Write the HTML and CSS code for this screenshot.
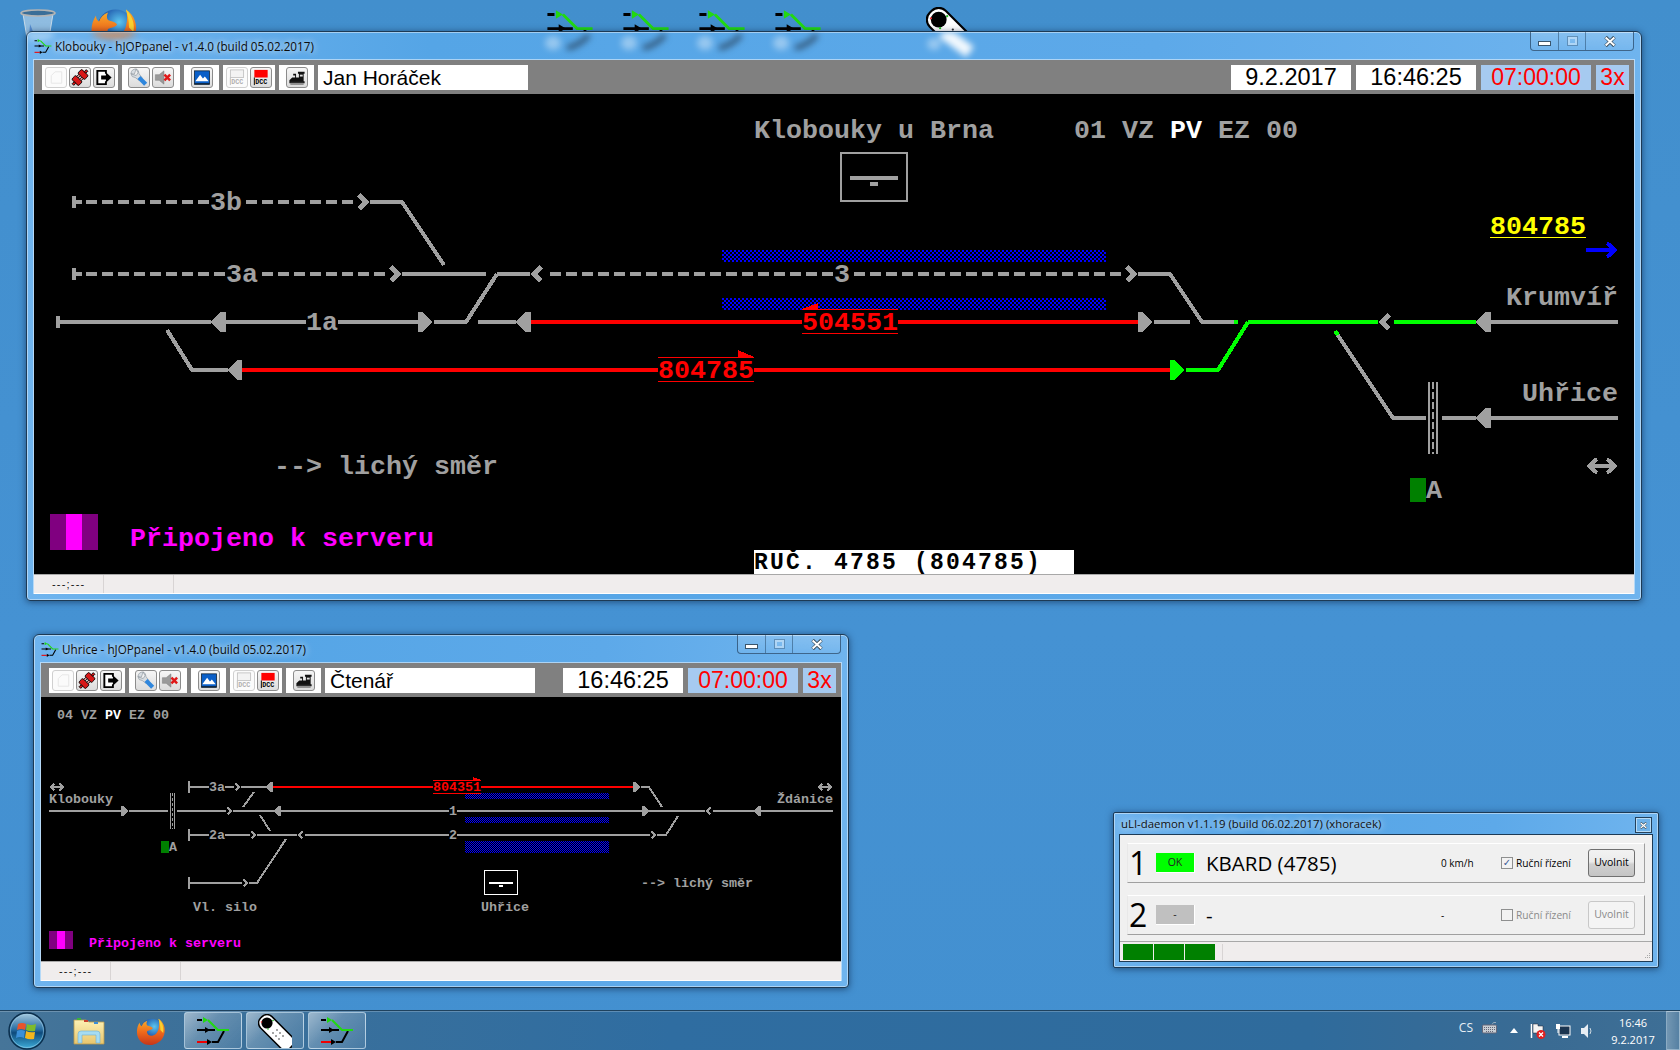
FILE: index.html
```html
<!DOCTYPE html>
<html lang="cs">
<head>
<meta charset="utf-8">
<title>hJOPpanel</title>
<link rel="stylesheet" href="styles.css">
</head>
<body>
<svg class="defs" width="0" height="0" aria-hidden="true">
  <defs>
    <pattern id="chk2" width="4" height="4" patternUnits="userSpaceOnUse"><rect width="2" height="2" fill="#00f"/><rect x="2" y="2" width="2" height="2" fill="#00f"/></pattern>
    <pattern id="chk1" width="2" height="2" patternUnits="userSpaceOnUse"><rect width="1" height="1" fill="#00f"/><rect x="1" y="1" width="1" height="1" fill="#00f"/></pattern>
    <polygon id="sr" points="0,-10 5,-10 14.5,0 5,10 0,10"/>
    <polygon id="sl" points="14.5,-10 9.5,-10 0,0 9.5,10 14.5,10"/>
    <polyline id="cr" points="5,-7 12,0 5,7"/>
    <polyline id="cl" points="11,-7 4,0 11,7"/>
    <path id="dbl" d="M4 0H28M11 -7L3 0L11 7M21 -7L29 0L21 7"/>
    <symbol id="hjop" viewBox="0 0 34 28">
      <path d="M1 3H6M1 13H19M16 25H22L28 14" fill="none" stroke="#000" stroke-width="2"/>
      <path d="M1 25H11" fill="none" stroke="#e00" stroke-width="2"/>
      <path d="M12 3L22 13H33" fill="none" stroke="#22d911" stroke-width="2"/>
      <polygon points="7,0 12,3 7,6" fill="#22d911"/>
      <polygon points="9,10 14,13 9,16" fill="#000"/>
      <polygon points="11,22 16,25 11,28" fill="#000"/>
    </symbol>
    <symbol id="remote" viewBox="0 0 34 34">
      <rect x="1" y="1" width="42" height="16" rx="7" transform="rotate(45 9 9)" fill="#fff" stroke="#000" stroke-width="1.5"/>
      <circle cx="9" cy="9" r="5.6" fill="#000"/>
      <circle cx="3.5" cy="8" r=".8" fill="#e33"/><circle cx="15" cy="6.500" r=".8" fill="#2b2"/><circle cx="10" cy="15" r=".8" fill="#2b2"/>
      <circle cx="19" cy="16" r=".8" fill="#333"/><circle cx="22" cy="19" r=".8" fill="#333"/><circle cx="25" cy="22" r=".8" fill="#333"/>
      <circle cx="15" cy="19" r=".8" fill="#333"/><circle cx="18" cy="22" r=".8" fill="#333"/><circle cx="21" cy="25" r=".8" fill="#333"/>
    </symbol>
    <radialGradient id="ffglobe" cx=".6" cy=".35" r=".7"><stop offset="0" stop-color="#5cc6f0"/><stop offset=".55" stop-color="#2a6cb8"/><stop offset="1" stop-color="#27306e"/></radialGradient>
    <linearGradient id="fffox" x1="0" y1="0" x2="0" y2="1"><stop offset="0" stop-color="#f8b52a"/><stop offset=".5" stop-color="#ef6a1c"/><stop offset="1" stop-color="#c6361a"/></linearGradient>
    <symbol id="firefox" viewBox="0 0 32 32">
      <circle cx="17" cy="15" r="12" fill="url(#ffglobe)"/>
      <path d="M24 3C30 7 32 14 30 20C28 27 21 31 15 31C7 31 1 25 1 17C1 13 2 10 4 7C4 9 4.500 10 6 11C7 8 9 6 12 5C11 7 11 9 12 10C14 11 17 11 18 13C17 15 14 15 12 16C11 18 13 21 16 21C20 21 23 18 24 14C25 10 25 6 24 3Z" fill="url(#fffox)"/>
      <path d="M24 3C28 7 30 12 29 18L26 15C26 10 25 6 24 3Z" fill="#fad02e"/>
    </symbol>
    <linearGradient id="orbg" x1="0" y1="0" x2="0" y2="1"><stop offset="0" stop-color="#a8cbe0"/><stop offset=".45" stop-color="#2a6fa4"/><stop offset=".55" stop-color="#0d4a7c"/><stop offset="1" stop-color="#3fb0dc"/></linearGradient>
    <symbol id="orb" viewBox="0 0 38 38">
      <circle cx="19" cy="19" r="18" fill="url(#orbg)" stroke="#0b2f4d" stroke-width="1.500"/>
      <circle cx="19" cy="19" r="16.500" fill="none" stroke="#9ccbe6" stroke-width=".6"/>
      <path d="M10 12Q14 10 18 12L17 18Q13 16 9 18Z" fill="#e8542c"/>
      <path d="M19 12Q23 14 28 12L27 19Q22 20 18 18Z" fill="#7fbb2a"/>
      <path d="M9 19Q13 17 17 19L16 26Q12 24 8 26Z" fill="#3a8fd8"/>
      <path d="M18 19Q22 21 27 20L26 27Q21 28 17 26Z" fill="#f2b61d"/>
    </symbol>
    <linearGradient id="fld" x1="0" y1="0" x2="0" y2="1"><stop offset="0" stop-color="#fdf1b4"/><stop offset="1" stop-color="#e8c66e"/></linearGradient>
    <symbol id="folder" viewBox="0 0 32 28">
      <path d="M1 3H13L16 5H31V27H1Z" fill="url(#fld)" stroke="#b99b4c" stroke-width=".8"/>
      <rect x="4" y="1" width="4" height="2" fill="#3cb23c"/><rect x="11" y="3" width="4" height="2" fill="#c8402f"/><rect x="21" y="5" width="4" height="2" fill="#3b8ed8"/>
      <path d="M5 26V17Q5 14 8 14H24Q27 14 27 17V26H23V18H9V26Z" fill="#a6dcf2" stroke="#6eaed0" stroke-width=".6"/>
    </symbol>
    <symbol id="bin" viewBox="0 0 36 36">
      <path d="M3 6L8 36H28L33 6Z" fill="#cfe2f0" fill-opacity=".55" stroke="#dfe8ee" stroke-width=".8"/>
      <ellipse cx="18" cy="5" rx="17" ry="3" fill="#3a6e98" stroke="#b4b4b4" stroke-width="1.600"/>
      <path d="M10 16L14 26L9 30Z" fill="#3c78c8" fill-opacity=".7"/>
    </symbol>
    <symbol id="i-blank" viewBox="0 0 20 20"><path d="M5 16V8L9 4H16V16Z" fill="none" stroke="#e6e6e6"/></symbol>
    <symbol id="i-plug" viewBox="0 0 20 20">
      <g transform="rotate(-45 10 10)" stroke="#000" stroke-width=".9">
        <rect x="2.500" y="5" width="6" height="10" rx="1.500" fill="#d81818"/><rect x="11.500" y="5" width="6" height="10" rx="1.500" fill="#d81818"/>
        <rect x="8.500" y="6.800" width="3" height="2.200" fill="#f0a0a0"/><rect x="8.500" y="11" width="3" height="2.200" fill="#f0a0a0"/>
        <rect x="-.5" y="8.800" width="3" height="2.400" fill="#d81818"/><rect x="17.500" y="8.800" width="3" height="2.400" fill="#d81818"/>
      </g>
    </symbol>
    <symbol id="i-exit" viewBox="0 0 20 20"><path d="M12 6V3H3V17H12V14" fill="#fff" stroke="#000" stroke-width="2"/><path d="M7 8H12V4.500L18 10L12 15.500V12H7Z" fill="#000"/></symbol>
    <symbol id="i-wrench" viewBox="0 0 20 20">
      <path d="M7 1Q2 1 1.500 6L5 6.500L6 4ZM1.500 6Q2 10 6 10L10 13L13 10L10 6Q10 2 7 1L9 5L7 8L4 7Z" fill="#d8dde2" stroke="#8f98a0" stroke-width=".7"/>
      <path d="M10 10L17 17" stroke="#2f86dc" stroke-width="4.500"/>
    </symbol>
    <symbol id="i-mute" viewBox="0 0 20 20">
      <path d="M2 7H6L11 3V17L6 13H2Z" fill="#9a9a9a" stroke="#777" stroke-width=".5"/>
      <path d="M11.500 7L17.500 13M17.500 7L11.500 13" stroke="#e01818" stroke-width="2.600"/>
    </symbol>
    <symbol id="i-pic" viewBox="0 0 20 20">
      <rect x="2" y="3" width="16" height="14" fill="#0a5fc8" stroke="#123" stroke-width=".8"/>
      <path d="M3 14L8 7L11 11L13 9L17 14Z" fill="#fff"/><rect x="2" y="16" width="16" height="1.500" fill="#123"/>
    </symbol>
    <symbol id="i-dcc0" viewBox="0 0 20 20">
      <rect x="3" y="2" width="14" height="8" fill="#f3f3f3" stroke="#bbb" stroke-width=".8"/>
      <path d="M3 10V18" stroke="#bbb"/>
      <text x="4" y="17" class="dcc dcc-off">DCC</text>
    </symbol>
    <symbol id="i-dcc1" viewBox="0 0 20 20">
      <rect x="3" y="2" width="14" height="8" fill="#f00"/>
      <path d="M3 10V18" stroke="#000"/>
      <text x="4" y="17" class="dcc">DCC</text>
    </symbol>
    <symbol id="i-loco" viewBox="0 0 20 20">
      <path d="M2 13L5 10H8V8H6V6H9V10H12V6H11V4H18V6H17V14H18V16H2Z" fill="#111"/>
      <path d="M13 7H16V9H13Z" fill="#ddd"/><path d="M3 15H17M3 17H17" stroke="#444" stroke-width=".8"/>
    </symbol>
    <symbol id="i-x" viewBox="0 0 16 12">
      <path d="M3 1L13 11M13 1L3 11" stroke="#2b3a46" stroke-width="4"/>
      <path d="M3 1.500L13 10.500M13 1.500L3 10.500" stroke="#fff" stroke-width="2.400"/>
    </symbol>
  </defs>
</svg>

<div class="desktop-icons">
  <svg class="di di-bin"><use href="#bin"/></svg>
  <svg class="di di-ff"><use href="#firefox"/></svg>
  <svg class="di di-p1"><use href="#hjop"/></svg>
  <svg class="di di-p2"><use href="#hjop"/></svg>
  <svg class="di di-p3"><use href="#hjop"/></svg>
  <svg class="di di-p4"><use href="#hjop"/></svg>
  <svg class="di di-rm"><use href="#remote"/></svg>
</div>

<!-- ============ Klobouky ============ -->
<section class="win win-a">
  <header class="titlebar">
    <svg class="smudge" width="1614" height="28" aria-hidden="true">
      <ellipse cx="87" cy="0" rx="22" ry="7" fill="#f08030" fill-opacity=".75"/>
      <ellipse cx="11" cy="2" rx="16" ry="7" fill="#fff" fill-opacity=".35"/>
      <g fill="#fff" fill-opacity=".38">
        <ellipse cx="526" cy="11" rx="8" ry="7"/><ellipse cx="602" cy="11" rx="8" ry="7"/><ellipse cx="678" cy="11" rx="8" ry="7"/><ellipse cx="754" cy="11" rx="8" ry="7"/><ellipse cx="907" cy="12" rx="7" ry="6"/>
      </g>
      <g fill="none" stroke="#23384d" stroke-opacity=".7" stroke-width="5">
        <path d="M540 16Q552 14 562 3"/><path d="M616 16Q628 14 638 3"/><path d="M692 16Q704 14 714 3"/><path d="M768 16Q780 14 790 3"/>
      </g>
      <path d="M916 0L943 20" stroke="#fff" stroke-width="13" stroke-opacity=".92"/>
    </svg>
    <svg class="app-ico"><use href="#hjop"/></svg>
    <span class="title-text">Klobouky - hJOPpanel - v1.4.0 (build 05.02.2017)</span>
    <div class="caps">
      <span class="cap cap-min"><i></i></span>
      <span class="cap cap-max"><i></i></span>
      <span class="cap cap-close"><svg class="cap-x"><use href="#i-x"/></svg></span>
    </div>
  </header>
  <div class="client">
    <div class="toolbar">
      <div class="grp g1">
        <span class="btn off"><svg><use href="#i-blank"/></svg></span>
        <span class="btn"><svg><use href="#i-plug"/></svg></span>
        <span class="btn"><svg><use href="#i-exit"/></svg></span>
      </div>
      <div class="grp g2">
        <span class="btn"><svg><use href="#i-wrench"/></svg></span>
        <span class="btn"><svg><use href="#i-mute"/></svg></span>
      </div>
      <div class="grp g3"><span class="btn"><svg><use href="#i-pic"/></svg></span></div>
      <div class="grp g4">
        <span class="btn off"><svg><use href="#i-dcc0"/></svg></span>
        <span class="btn"><svg><use href="#i-dcc1"/></svg></span>
      </div>
      <div class="grp g5"><span class="btn"><svg><use href="#i-loco"/></svg></span></div>
      <div class="user">Jan Horáček</div>
      <div class="clock date">9.2.2017</div>
      <div class="clock">16:46:25</div>
      <div class="model">07:00:00</div>
      <div class="speed">3x</div>
    </div>
    <svg class="panel panel-a" viewBox="34 94 1600 480" width="1600" height="480">
      <rect class="chk" x="722" y="250" width="384" height="12" fill="url(#chk2)"/>
      <rect class="chk" x="722" y="298" width="384" height="12" fill="url(#chk2)"/>

      <path class="tk" d="M370 202H402L444 265M402 274H486M497 274H530M497 274L466 322H434M1138 274H1170L1202 322H1234M60 322H211M226 322H306M338 322H418M478 322H516M1154 322H1190M1490 322H1618M167 330L192 370H228M1337 334L1393 418H1426M1442 418H1476M1490 418H1618"/>
      <path class="tk dash" d="M86 202H210M246 202H354M86 274H226M262 274H386M550 274H834M854 274H1122"/>
      <path class="tk gn" d="M1234 322H1238M1248 322H1378M1248 322L1218 370H1186M1394 322H1476M1335 331L1338 335"/>
      <path class="tk rd" d="M530 322H802M898 322H1138M242 370H658M754 370H1170"/>

      <g class="fill-g">
        <rect x="72" y="196" width="4" height="12"/><rect x="76" y="200" width="6" height="4" />
        <rect x="72" y="268" width="4" height="12"/><rect x="76" y="272" width="6" height="4"/>
        <rect x="56" y="316" width="4" height="12"/>
        <use href="#sl" x="211" y="322"/><use href="#sr" x="418" y="322"/><use href="#sl" x="516" y="322"/>
        <use href="#sr" x="1138" y="322"/><use href="#sl" x="1476" y="322"/><use href="#sl" x="1476" y="418"/><use href="#sl" x="227.500" y="370"/>
      </g>
      <use class="fill-gn" href="#sr" x="1170" y="370"/>
      <g class="chev">
        <use href="#cr" x="354" y="202"/><use href="#cr" x="386" y="274"/><use href="#cl" x="530" y="274"/><use href="#cr" x="1122" y="274"/><use href="#cl" x="1378" y="322"/>
      </g>
      <g class="fill-g">
        <rect x="1428" y="382" width="2" height="72"/><rect x="1436" y="382" width="2" height="72"/>
      </g>
      <line class="xdash" x1="1433" y1="382" x2="1433" y2="454"/>

      <path class="arrow-b" d="M1586 250H1616M1607 243L1615 250L1607 257"/>
      <use class="dblarrow" href="#dbl" x="1586" y="466"/>

      <rect class="dk" x="841" y="153" width="66" height="48"/>
      <rect class="fill-g" x="850" y="176" width="48" height="4"/>
      <rect class="fill-g" x="870" y="182" width="8" height="4"/>

      <rect class="fill-y" x="1490" y="237" width="96" height="1"/>
      <g class="fill-r">
        <rect x="802" y="309" width="96" height="1"/><rect x="802" y="333" width="96" height="1"/>
        <polygon points="802,309 818,303 818,309"/>
        <rect x="658" y="357" width="96" height="1"/><rect x="658" y="381" width="96" height="1"/>
        <polygon points="738,350 754,357 738,357"/>
      </g>
      <rect class="fill-dg" x="1410" y="478" width="16" height="24"/>
      <rect class="fill-pd" x="50" y="514" width="48" height="36"/>
      <rect class="fill-p" x="66" y="514" width="16" height="36"/>
      <rect class="fill-w" x="754" y="550" width="320" height="24"/>

      <g class="txt txt-l">
        <text x="754" y="138">Klobouky u Brna</text>
        <text x="1074" y="138">01</text><text x="1122" y="138">VZ</text><text class="wh" x="1170" y="138">PV</text><text x="1218" y="138">EZ</text><text x="1266" y="138">00</text>
        <text x="210" y="210">3b</text><text x="226" y="282">3a</text><text x="834" y="282">3</text><text x="306" y="330">1a</text>
        <text class="rdt" x="802" y="330">504551</text><text class="rdt" x="658" y="378">804785</text>
        <text class="yl" x="1490" y="234">804785</text>
        <text x="1506" y="305">Krumvíř</text><text x="1522" y="401">Uhřice</text>
        <text x="1426" y="498">A</text>
        <text x="274" y="474">--&gt; lichý směr</text>
        <text class="mg" x="130" y="546">Připojeno k serveru</text>
        <text class="bk" x="754" y="569">RUČ. 4785 (804785)</text>
      </g>
    </svg>
    <div class="statusbar">
      <span class="sb-cell sb-pos">---;---</span>
      <span class="sb-cell sb-mid"></span>
    </div>
  </div>
</section>

<!-- ============ Uhrice ============ -->
<section class="win win-b">
  <header class="titlebar">
    <svg class="app-ico"><use href="#hjop"/></svg>
    <span class="title-text">Uhrice - hJOPpanel - v1.4.0 (build 05.02.2017)</span>
    <div class="caps">
      <span class="cap cap-min"><i></i></span>
      <span class="cap cap-max"><i></i></span>
      <span class="cap cap-close"><svg class="cap-x"><use href="#i-x"/></svg></span>
    </div>
  </header>
  <div class="client">
    <div class="toolbar">
      <div class="grp g1">
        <span class="btn off"><svg><use href="#i-blank"/></svg></span>
        <span class="btn"><svg><use href="#i-plug"/></svg></span>
        <span class="btn"><svg><use href="#i-exit"/></svg></span>
      </div>
      <div class="grp g2">
        <span class="btn"><svg><use href="#i-wrench"/></svg></span>
        <span class="btn"><svg><use href="#i-mute"/></svg></span>
      </div>
      <div class="grp g3"><span class="btn"><svg><use href="#i-pic"/></svg></span></div>
      <div class="grp g4">
        <span class="btn off"><svg><use href="#i-dcc0"/></svg></span>
        <span class="btn"><svg><use href="#i-dcc1"/></svg></span>
      </div>
      <div class="grp g5"><span class="btn"><svg><use href="#i-loco"/></svg></span></div>
      <div class="user">Čtenář</div>
      <div class="clock date-none">16:46:25</div>
      <div class="model">07:00:00</div>
      <div class="speed">3x</div>
    </div>
    <svg class="panel panel-b" viewBox="41 697 800 264" width="800" height="264">
      <rect class="chk" x="465" y="793" width="144" height="6" fill="url(#chk1)"/>
      <rect class="chk" x="465" y="817" width="144" height="6" fill="url(#chk1)"/>
      <rect class="chk" x="465" y="841" width="144" height="12" fill="url(#chk1)"/>

      <path class="tk" d="M49 811H121M129 811H168M177 811H226M233 811H274M281 811H449M457 811H642M649 811H705M713 811H754M761 811H833M190 787H209M225 787H234M241 787H266M641 787H649L662 807M254 792L243 807M260 815L270 831M190 835H209M225 835H250M257 835H297M305 835H449M457 835H650M657 835H666L678 816M190 883H242M249 883H257L286 839"/>
      <path class="tk rd" d="M273 787H433M481 787H633"/>
      <g class="fill-g">
        <rect x="188" y="781" width="2" height="12"/><rect x="188" y="829" width="2" height="12"/><rect x="188" y="877" width="2" height="12"/>
        <use href="#sr" transform="translate(121 811) scale(.5)"/>
        <use href="#sl" transform="translate(274 811) scale(.5)"/>
        <use href="#sl" transform="translate(266 787) scale(.5)"/>
        <use href="#sr" transform="translate(633 787) scale(.5)"/>
        <use href="#sr" transform="translate(642 811) scale(.5)"/>
        <use href="#sl" transform="translate(754 811) scale(.5)"/>
        <rect x="170" y="793" width="1" height="36"/><rect x="174" y="793" width="1" height="36"/>
      </g>
      <line class="xdash xdash-s" x1="172.500" y1="793" x2="172.500" y2="829"/>
      <g class="chev">
        <use href="#cr" transform="translate(225 811) scale(.5)"/>
        <use href="#cr" transform="translate(233 787) scale(.5)"/>
        <use href="#cr" transform="translate(249 835) scale(.5)"/>
        <use href="#cl" transform="translate(297 835) scale(.5)"/>
        <use href="#cr" transform="translate(241 883) scale(.5)"/>
        <use href="#cr" transform="translate(649 835) scale(.5)"/>
        <use href="#cl" transform="translate(705 811) scale(.5)"/>
      </g>
      <use class="dblarrow" href="#dbl" transform="translate(49 787) scale(.5)"/>
      <use class="dblarrow" href="#dbl" transform="translate(817 787) scale(.5)"/>

      <rect class="dk-w" x="484.500" y="870.500" width="33" height="24"/>
      <rect class="fill-w" x="489" y="882" width="24" height="2"/>
      <rect class="fill-w" x="499" y="885" width="4" height="2"/>

      <g class="fill-r">
        <rect x="433" y="780" width="48" height="1"/><rect x="433" y="793" width="48" height="1"/>
        <polygon points="473,777 481,780 473,780"/>
      </g>
      <rect class="fill-dg" x="161" y="841" width="8" height="12"/>
      <rect class="fill-pd" x="49" y="931" width="24" height="18"/>
      <rect class="fill-p" x="57" y="931" width="8" height="18"/>

      <g class="txt txt-s">
        <text x="57" y="719">04</text><text x="81" y="719">VZ</text><text class="wh" x="105" y="719">PV</text><text x="129" y="719">EZ</text><text x="153" y="719">00</text>
        <text x="49" y="803">Klobouky</text><text x="777" y="803">Ždánice</text>
        <text x="209" y="791">3a</text><text x="209" y="839">2a</text><text x="449" y="815">1</text><text x="449" y="839">2</text>
        <text class="rdt" x="433" y="791">804351</text>
        <text x="169" y="851">A</text>
        <text x="193" y="911">Vl. silo</text><text x="481" y="911">Uhřice</text>
        <text x="641" y="887">--&gt; lichý směr</text>
        <text class="mg" x="89" y="947">Připojeno k serveru</text>
      </g>
    </svg>
    <div class="statusbar">
      <span class="sb-cell sb-pos">---;---</span>
      <span class="sb-cell sb-mid"></span>
    </div>
  </div>
</section>

<!-- ============ uLI-daemon ============ -->
<section class="win win-c">
  <header class="titlebar tool">
    <span class="title-text tool-text">uLI-daemon v1.1.19 (build 06.02.2017) (xhoracek)</span>
    <span class="tool-close"><svg class="tool-x"><use href="#i-x"/></svg></span>
  </header>
  <div class="client uli">
    <div class="slot">
      <span class="slot-n">1</span>
      <span class="slot-state ok">OK</span>
      <span class="slot-name">KBARD (4785)</span>
      <span class="slot-speed">0 km/h</span>
      <label class="slot-check"><span class="box checked">✓</span>Ruční řízení</label>
      <span class="slot-btn focus">Uvolnit</span>
    </div>
    <div class="slot">
      <span class="slot-n">2</span>
      <span class="slot-state">-</span>
      <span class="slot-name">-</span>
      <span class="slot-speed">-</span>
      <label class="slot-check dis"><span class="box"></span>Ruční řízení</label>
      <span class="slot-btn dis">Uvolnit</span>
    </div>
    <div class="uli-status">
      <span class="seg"></span><span class="seg"></span><span class="seg"></span>
      <span class="grip"></span>
      <svg class="grip-dots" viewBox="0 0 8 8"><path d="M6 1h1v1h-1zM4 3h1v1h-1zM6 3h1v1h-1zM2 5h1v1h-1zM4 5h1v1h-1zM6 5h1v1h-1z" fill="#a8a8a8"/></svg>
    </div>
  </div>
</section>

<!-- ============ taskbar ============ -->
<footer class="taskbar">
  <svg class="tb-orb"><use href="#orb"/></svg>
  <svg class="tb-folder"><use href="#folder"/></svg>
  <svg class="tb-ff"><use href="#firefox"/></svg>
  <span class="task first"><svg class="task-ico"><use href="#hjop"/></svg></span>
  <span class="task"><svg class="task-ico rem"><use href="#remote"/></svg></span>
  <span class="task"><svg class="task-ico"><use href="#hjop"/></svg></span>
  <div class="tray">
    <span class="lang">CS</span>
    <svg class="tr-kbd" viewBox="0 0 15 12"><path d="M10 3Q11 0 14 1" fill="none" stroke="#9ab"/><rect x="0.500" y="3.500" width="14" height="8" rx="1" fill="#c8ced4" stroke="#667"/><path d="M2 6H13M2 8H13M4 10H11" stroke="#667" stroke-dasharray="1 1"/></svg>
    <svg class="tr-up" viewBox="0 0 8 5"><path d="M0 5L4 0L8 5Z" fill="#fff"/></svg>
    <svg class="tr-flag" viewBox="0 0 16 16"><path d="M1.500 1V15" stroke="#fff" stroke-width="1.500"/><path d="M3 1H8V3H13V10H3Z" fill="#f4f4f4" stroke="#223" stroke-width=".5"/><circle cx="11" cy="11.500" r="4.500" fill="#e02020"/><path d="M9 9.500L13 13.500M13 9.500L9 13.500" stroke="#fff" stroke-width="1.300"/></svg>
    <svg class="tr-net" viewBox="0 0 16 16"><rect x="4" y="3" width="11" height="9" fill="#1c3550" stroke="#fff"/><path d="M7 14H13" stroke="#fff" stroke-width="2"/><rect x="1" y="1" width="4" height="5" fill="#fff"/><path d="M3 6V10" stroke="#fff"/></svg>
    <svg class="tr-spk" viewBox="0 0 14 16"><path d="M1 5H4L8 1V15L4 11H1Z" fill="#e8eef4"/><path d="M10 5Q12 8 10 11" fill="none" stroke="#cdd8e0"/></svg>
    <div class="tray-clock"><span>16:46</span><span>9.2.2017</span></div>
    <span class="show-desk"></span>
  </div>
</footer>
</body>
</html>
```

FILE: styles.css
```css
html, body { margin: 0; padding: 0; }
body {
  position: relative;
  width: 1680px;
  height: 1050px;
  overflow: hidden;
  background: linear-gradient(180deg, #428fcd 0%, #4592d3 60%, #4390d0 100%);
  font-family: "Open Sans", "Liberation Sans", sans-serif;
}
.defs { position: absolute; }

/* desktop icons peeking above the windows */
.desktop-icons { position: absolute; inset: 0; }
.di { position: absolute; overflow: visible; }
.di-bin { left: 20px; top: 8px; width: 36px; height: 36px; }
.di-ff { left: 90px; top: 5px; width: 48px; height: 48px; }
.di-p1, .di-p2, .di-p3, .di-p4 { top: 10px; width: 48px; height: 40px; }
.di-p1 { left: 546px; }
.di-p2 { left: 622px; }
.di-p3 { left: 698px; }
.di-p4 { left: 774px; }
.di-rm { left: 926px; top: 7px; width: 48px; height: 48px; }

/* windows */
.win {
  position: absolute;
  display: flex;
  flex-direction: column;
  box-sizing: border-box;
  padding: 0 7px 7px;
  border: 1px solid #1d3a55;
  border-radius: 6px 6px 4px 4px;
  background: linear-gradient(90deg, #6fb4ee 0, #55a5e6 25%, #5da9e9 70%, #6fb4ee 100%);
  box-shadow: 0 1px 7px rgba(0, 20, 50, .55), inset 0 0 0 1px rgba(255, 255, 255, .45);
}
.win-a { left: 26px; top: 31px; width: 1616px; height: 570px; }
.win-b { left: 33px; top: 634px; width: 816px; height: 354px; }
.win-c { left: 1113px; top: 812px; width: 546px; height: 156px; border-radius: 2px; padding: 0 6px 6px; }

.titlebar {
  position: relative;
  display: flex;
  align-items: center;
  flex: 0 0 28px;
  overflow: hidden;
  margin: 0 -7px;
  padding: 0 7px;
}
.smudge { position: absolute; left: 0; top: 0; filter: blur(3px); }
.app-ico { position: relative; flex: 0 0 18px; width: 18px; height: 15px; margin-right: 3px; }
.title-text {
  position: relative;
  font-size: 11.7px;
  color: #0c0c0c;
  white-space: nowrap;
  text-shadow: 0 0 6px rgba(255, 255, 255, .75), 0 0 10px rgba(255, 255, 255, .6);
}
.caps {
  position: relative;
  display: flex;
  align-self: flex-start;
  margin-left: auto;
  height: 19px;
  box-sizing: border-box;
  border: 1px solid rgba(25, 55, 85, .65);
  border-top: 0;
  border-radius: 0 0 4px 4px;
  background: linear-gradient(180deg, rgba(255, 255, 255, .18), rgba(255, 255, 255, .05));
}
.cap { display: flex; align-items: center; justify-content: center; box-sizing: border-box; height: 100%; }
.cap-min { width: 28px; border-right: 1px solid rgba(25, 55, 85, .45); }
.cap-max { width: 27px; border-right: 1px solid rgba(25, 55, 85, .45); }
.cap-close { width: 47px; }
.cap-min i { display: block; width: 11px; height: 3px; margin-top: 4px; background: #fff; border: 1px solid #3a556c; }
.cap-max i { display: block; width: 5px; height: 4px; border: 2px solid rgba(255, 255, 255, .4); outline: 1px solid rgba(60, 90, 120, .45); }
.cap-x { width: 14px; height: 11px; }

.client { display: flex; flex-direction: column; flex: 1; min-height: 0; background: #000; box-shadow: 0 0 0 1px rgba(240, 248, 255, .55); }

/* toolbar */
.toolbar {
  flex: 0 0 34px;
  display: flex;
  box-sizing: border-box;
  padding: 5px 5px 4px 8px;
  gap: 4px;
  background: #808080;
}
.grp { display: flex; align-items: center; justify-content: center; gap: 2px; background: #fff; }
.g1 { width: 76px; }
.g2 { width: 58px; }
.g3, .g5 { width: 35px; }
.g4 { width: 52px; }
.btn {
  display: block;
  box-sizing: border-box;
  width: 22px;
  height: 21px;
  border: 1px solid #8c8c8c;
  border-radius: 3px;
  background: linear-gradient(180deg, #f6f6f6, #dcdcdc);
}
.btn.off { border-color: #d0d0d0; background: #fbfbfb; }
.btn svg { display: block; width: 20px; height: 19px; }
.dcc { font: 700 7px "Liberation Mono", monospace; fill: #000; }
.dcc-off { fill: #b0b0b0; }
.user {
  width: 210px;
  box-sizing: border-box;
  padding-left: 5px;
  background: #fff;
  color: #000;
  font: 21px/25px "Liberation Sans", sans-serif;
}
.clock, .model, .speed {
  font: 23.5px/25px "Liberation Sans", sans-serif;
  text-align: center;
}
.clock { width: 120px; background: #fff; color: #000; }
.date { margin-left: auto; }
.date-none { margin-left: auto; }
.model { width: 110px; background: #a6caf0; color: #f00; font-size: 23px; }
.speed { width: 33px; background: #a6caf0; color: #f00; font-size: 23px; }
.win-a .clock + .clock { margin-left: 1px; }
.win-a .model { margin-left: 1px; }
.win-b .model, .win-a .speed, .win-b .speed { margin-left: 1px; }

/* panel canvases */
.panel { display: block; flex: 0 0 auto; background: #000; shape-rendering: crispEdges; overflow: visible; }
.tk { fill: none; stroke: #a0a0a0; stroke-width: 4; }
.dash { stroke-dasharray: 11 5; }
.gn { stroke: #0f0; }
.rd { stroke: #f00; }
.panel-b .tk { stroke-width: 2; }
.fill-g { fill: #a0a0a0; }
.fill-gn { fill: #0f0; }
.fill-r { fill: #f00; }
.fill-y { fill: #ff0; }
.fill-w { fill: #fff; }
.fill-dg { fill: #008000; }
.fill-p { fill: #f0f; }
.fill-pd { fill: #800080; }
.chev { fill: none; stroke: #a0a0a0; stroke-width: 5; }
.dblarrow { fill: none; stroke: #a0a0a0; stroke-width: 4; }
.arrow-b { fill: none; stroke: #00f; stroke-width: 4; }
.xdash { stroke: #a0a0a0; stroke-width: 2; stroke-dasharray: 7 3; }
.xdash-s { stroke-width: 1; stroke-dasharray: 3 2; }
.dk { fill: none; stroke: #a0a0a0; stroke-width: 2; }
.dk-w { fill: none; stroke: #fff; stroke-width: 1; }
.txt text { font-family: "Liberation Mono", monospace; font-weight: 700; fill: #a0a0a0; }
.txt-l text { font-size: 26.67px; }
.txt-s text { font-size: 13.33px; }
.txt .wh { fill: #fff; }
.txt .rdt { fill: #f00; }
.txt .yl { fill: #ff0; }
.txt .mg { fill: #f0f; }
.txt-l .bk { fill: #000; font-size: 23px; letter-spacing: 2.2px; }

/* status bar */
.statusbar {
  position: relative;
  flex: 1;
  display: flex;
  box-sizing: border-box;
  border-top: 1px solid #a8a8a8;
  border-bottom: 1px solid #fff;
  background: #f0eded;
  font: 11px/18px "Liberation Sans", sans-serif;
  color: #111;
}
.sb-cell { box-sizing: border-box; border-right: 1px solid #d8d4d4; }
.sb-pos { width: 70px; padding-left: 18px; letter-spacing: 1.2px; }
.sb-mid { width: 70px; }

/* uLI window */
.titlebar.tool { flex: 0 0 22px; margin: 0 -6px; padding: 0 2px 0 7px; overflow: visible; }
.tool-text { font-size: 11.4px; color: #111; margin-top: -2px; }
.tool-close {
  display: flex;
  align-items: center;
  justify-content: center;
  box-sizing: border-box;
  width: 17px;
  height: 16px;
  margin: 2px 4px 0 auto;
  border: 1px solid #24415c;
  background: #6db1e9;
  box-shadow: inset 0 0 0 1px #b8dcf7;
}
.tool-x { width: 9px; height: 7px; }
.uli {
  background: #f0f0f0;
  box-sizing: border-box;
  padding: 8px 7px 2px;
  gap: 12px;
  outline: 1px solid #1d3a55;
  outline-offset: 0;
  font-family: "Open Sans", "Liberation Sans", sans-serif;
}
.slot {
  flex: 0 0 40px;
  display: flex;
  align-items: center;
  box-sizing: border-box;
  padding-left: 1px;
  border: 1px solid #fff;
  border-right-color: #a0a0a0;
  border-bottom: 1px solid #a0a0a0;
  border-left-color: #e8e8e8;
  color: #000;
}
.slot-n { flex: 0 0 27px; font: 32px/38px "Open Sans", sans-serif; letter-spacing: -1px; }
.slot-state {
  flex: 0 0 39px;
  box-sizing: border-box;
  height: 20px;
  border-right: 1px solid #fff;
  border-bottom: 1px solid #fff;
  background: #c0c0c0;
  font-size: 10.500px;
  line-height: 19px;
  text-align: center;
  color: #222;
}
.slot-state.ok { background: #0f0; }
.slot-name { flex: 0 0 235px; margin-left: 11px; font-size: 20.500px; line-height: 26px; white-space: nowrap; }
.slot-speed { flex: 0 0 60px; font-size: 10px; }
.slot-check { flex: 0 0 87px; display: flex; align-items: center; gap: 3px; font-size: 10.200px; white-space: nowrap; }
.slot-check.dis { color: #8a8a8a; }
.box {
  display: block;
  box-sizing: border-box;
  flex: 0 0 12px;
  width: 12px;
  height: 12px;
  border: 1px solid #8e8f8f;
  background: #f2f2f2;
  font: 700 10px/10px "DejaVu Sans", sans-serif;
  text-align: center;
  color: #3a5a96;
}
.slot-btn {
  display: block;
  box-sizing: border-box;
  flex: 0 0 47px;
  height: 28px;
  border: 1px solid #707070;
  border-radius: 3px;
  background: linear-gradient(180deg, #f2f2f2 0, #ebebeb 45%, #d0d0d0 55%, #c4c4c4 100%);
  font-size: 10.500px;
  line-height: 25px;
  text-align: center;
}
.slot-btn.dis { border-color: #c8c8c8; background: #f4f4f4; color: #8a8a8a; }
.uli-status {
  position: relative;
  flex: 1;
  display: flex;
  gap: 1px;
  margin: -6px -7px -2px;
  box-sizing: border-box;
  padding: 2px 0 1px 3px;
  border-top: 1px solid #a8a8a8;
  background: #f0eded;
}
.seg { display: block; flex: 0 0 30px; background: #008000; }
.grip {
  flex: 0 0 6px;
  margin-left: 6px;
  border-left: 1px solid #d8d4d4;
}
.grip-dots { width: 8px; height: 8px; align-self: flex-end; margin-left: auto; margin-right: 1px; }

/* taskbar */
.taskbar {
  position: absolute;
  left: 0;
  right: 0;
  bottom: 0;
  height: 40px;
  display: flex;
  align-items: center;
  box-sizing: border-box;
  border-top: 1px solid #1f425e;
  background: linear-gradient(90deg, #467599 0, #3e7199 8%, #2f6da1 40%, #2f6b9c 78%, #3a6b93 92%, #3e6f96 100%);
  box-shadow: inset 0 1px 0 rgba(255, 255, 255, .22);
}
.tb-orb { flex: 0 0 38px; width: 38px; height: 38px; margin-left: 8px; }
.tb-folder { flex: 0 0 32px; width: 32px; height: 28px; margin-left: 27px; }
.tb-ff { flex: 0 0 30px; width: 30px; height: 30px; margin-left: 31px; }
.task {
  display: flex;
  align-items: center;
  justify-content: center;
  box-sizing: border-box;
  flex: 0 0 58px;
  height: 37px;
  margin-left: 4px;
  border: 1px solid rgba(210, 230, 245, .65);
  border-radius: 3px;
  background: linear-gradient(135deg, rgba(255, 255, 255, .5) 0, rgba(255, 255, 255, .22) 40%, rgba(255, 255, 255, .08) 100%);
}
.task.first { margin-left: 18px; }
.task-ico { width: 34px; height: 28px; }
.task-ico.rem { width: 34px; height: 34px; }
.tray { display: flex; align-items: center; margin-left: auto; height: 100%; color: #fff; }
.lang { font: 12px "Open Sans", sans-serif; margin-bottom: 7px; color: #e6eef5; }
.tr-kbd { width: 15px; height: 13px; margin: 0 0 6px 9px; }
.tr-up { width: 8px; height: 5px; margin-left: 13px; }
.tr-flag { width: 16px; height: 16px; margin-left: 12px; }
.tr-net { width: 16px; height: 16px; margin-left: 9px; }
.tr-spk { width: 14px; height: 16px; margin-left: 9px; }
.tray-clock {
  display: flex;
  flex-direction: column;
  align-items: center;
  width: 44px;
  margin-left: 17px;
  font-size: 11px;
  line-height: 17px;
}
.show-desk {
  display: block;
  width: 14px;
  height: 100%;
  margin-left: 11px;
  border: 1px solid rgba(220, 235, 245, .4);
  box-sizing: border-box;
  background: linear-gradient(90deg, rgba(255, 255, 255, .28), rgba(255, 255, 255, .12));
}
```
